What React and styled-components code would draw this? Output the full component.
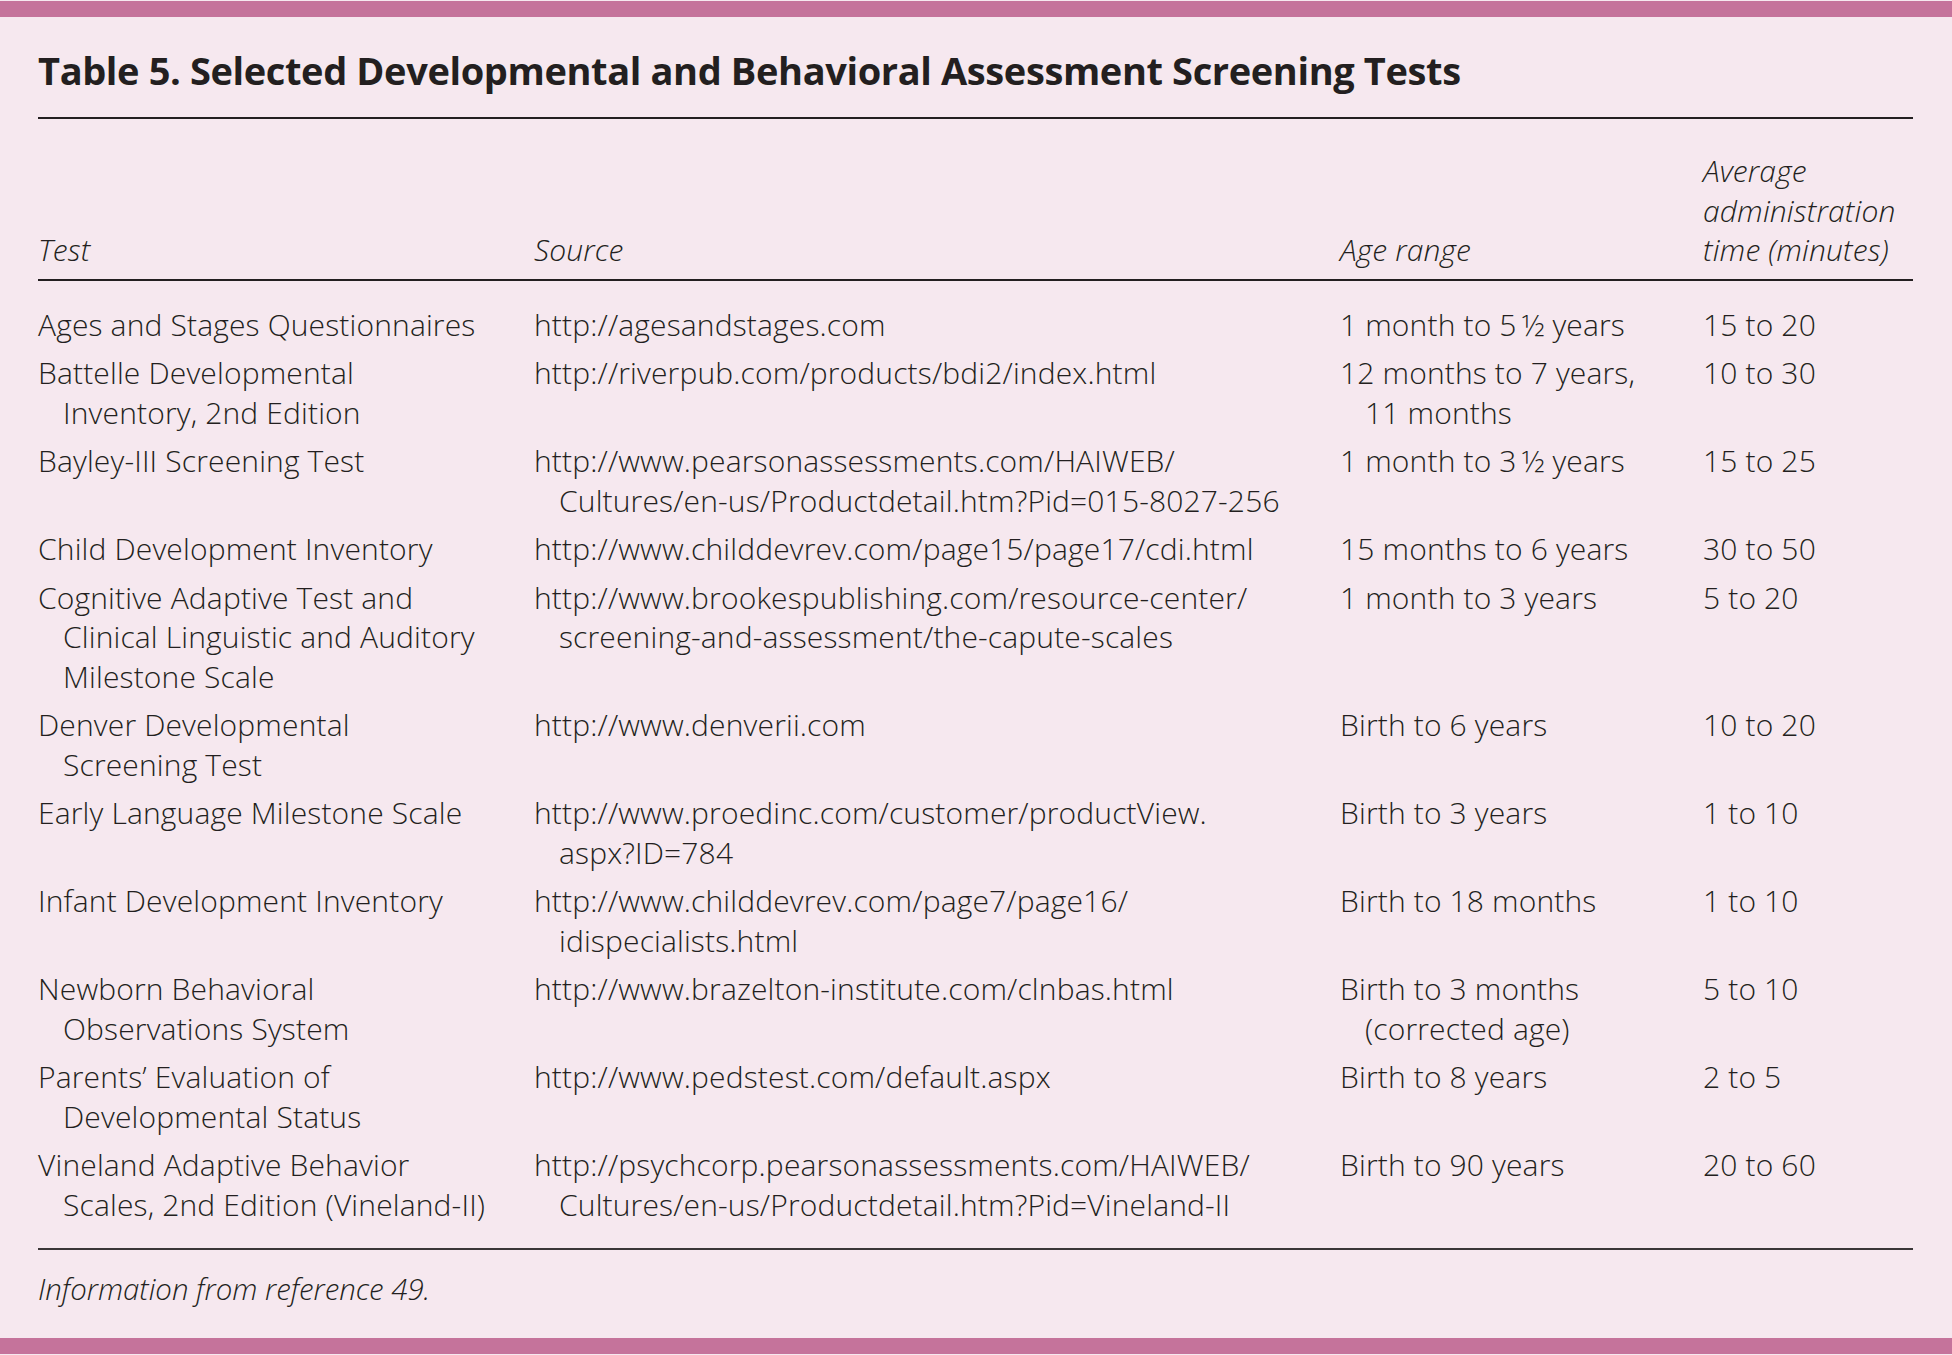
import React from "react";
import styled, { createGlobalStyle } from "styled-components";

const GlobalStyle = createGlobalStyle`
  html, body {
    margin: 0;
    padding: 0;
    background: #f6e8ef;
  }
  body {
    font-family: "Open Sans", "Noto Sans", "Liberation Sans", sans-serif;
    color: #231f20;
  }
`;

const Page = styled.div`
  width: 1952px;
  height: 1355px;
  background: #f6e8ef;
  display: flex;
  flex-direction: column;
  overflow: hidden;
`;

const Bar = styled.div`
  height: 16px;
  margin-top: 1px;
  background: #c5739b;
  flex-shrink: 0;
`;

const Content = styled.div`
  flex: 1;
  padding: 0 39px 0 38px;
  display: flex;
  flex-direction: column;
`;

const Title = styled.h1`
  margin: 31px 0 0 0;
  font-size: 38px;
  line-height: 44px;
  font-weight: 700;
  letter-spacing: -0.38px;
  padding-bottom: 25px;
  border-bottom: 2px solid #231f20;
`;

// shared column layout for header + body rows
const cols = "496px 806px 363px 1fr";

const HeadRow = styled.div`
  display: grid;
  grid-template-columns: ${cols};
  align-items: end;
  padding: 32px 0 9px;
  border-bottom: 2px solid #231f20;
`;

const HeadCell = styled.div`
  font-size: 30px;
  line-height: 39.5px;
  letter-spacing: 0.15px;
  font-style: italic;
  font-weight: 300;
`;

const Body = styled.div`
  padding-top: 24px;
  padding-bottom: 15px;
  border-bottom: 2px solid #3a3637;
`;

const Row = styled.div`
  display: grid;
  grid-template-columns: ${cols};
  padding-bottom: 9px;
`;

const Cell = styled.div`
  font-size: 30px;
  line-height: 39.5px;
  letter-spacing: 0.15px;
  font-weight: 300;
  white-space: nowrap;
`;

const Line = styled.div`
  padding-left: ${(p) => (p.$wrapped ? "25px" : "0")};
`;

const Footnote = styled.p`
  margin: 20px 0 0;
  font-size: 29.4px;
  line-height: 39.5px;
  font-style: italic;
  font-weight: 300;
`;

const BottomBar = styled(Bar)`
  margin-top: auto;
  margin-bottom: 1px;
`;

const rows = [
  [
    ["Ages and Stages Questionnaires"],
    ["http://agesandstages.com"],
    ["1 month to 5\u2009½ years"],
    ["15 to 20"],
  ],
  [
    ["Battelle Developmental", "Inventory, 2nd Edition"],
    ["http://riverpub.com/products/bdi2/index.html"],
    ["12 months to 7 years,", "11 months"],
    ["10 to 30"],
  ],
  [
    ["Bayley-III Screening Test"],
    [
      "http://www.pearsonassessments.com/HAIWEB/",
      "Cultures/en-us/Productdetail.htm?Pid=015-8027-256",
    ],
    ["1 month to 3\u2009½ years"],
    ["15 to 25"],
  ],
  [
    ["Child Development Inventory"],
    ["http://www.childdevrev.com/page15/page17/cdi.html"],
    ["15 months to 6 years"],
    ["30 to 50"],
  ],
  [
    [
      "Cognitive Adaptive Test and",
      "Clinical Linguistic and Auditory",
      "Milestone Scale",
    ],
    [
      "http://www.brookespublishing.com/resource-center/",
      "screening-and-assessment/the-capute-scales",
    ],
    ["1 month to 3 years"],
    ["5 to 20"],
  ],
  [
    ["Denver Developmental", "Screening Test"],
    ["http://www.denverii.com"],
    ["Birth to 6 years"],
    ["10 to 20"],
  ],
  [
    ["Early Language Milestone Scale"],
    ["http://www.proedinc.com/customer/productView.", "aspx?ID=784"],
    ["Birth to 3 years"],
    ["1 to 10"],
  ],
  [
    ["Infant Development Inventory"],
    ["http://www.childdevrev.com/page7/page16/", "idispecialists.html"],
    ["Birth to 18 months"],
    ["1 to 10"],
  ],
  [
    ["Newborn Behavioral", "Observations System"],
    ["http://www.brazelton-institute.com/clnbas.html"],
    ["Birth to 3 months", "(corrected age)"],
    ["5 to 10"],
  ],
  [
    ["Parents\u2019 Evaluation of", "Developmental Status"],
    ["http://www.pedstest.com/default.aspx"],
    ["Birth to 8 years"],
    ["2 to 5"],
  ],
  [
    ["Vineland Adaptive Behavior", "Scales, 2nd Edition (Vineland-II)"],
    [
      "http://psychcorp.pearsonassessments.com/HAIWEB/",
      "Cultures/en-us/Productdetail.htm?Pid=Vineland-II",
    ],
    ["Birth to 90 years"],
    ["20 to 60"],
  ],
];

function App() {
  return (
    <Page>
      <GlobalStyle />
      <Bar />
      <Content>
        <Title>
          Table 5. Selected Developmental and Behavioral Assessment Screening
          Tests
        </Title>
        <HeadRow>
          <HeadCell>Test</HeadCell>
          <HeadCell>Source</HeadCell>
          <HeadCell>Age range</HeadCell>
          <HeadCell>
            Average
            <br />
            administration
            <br />
            time (minutes)
          </HeadCell>
        </HeadRow>
        <Body>
          {rows.map((row, i) => (
            <Row key={i}>
              {row.map((cell, j) => (
                <Cell key={j}>
                  {cell.map((text, k) => (
                    <Line key={k} $wrapped={k > 0}>
                      {text}
                    </Line>
                  ))}
                </Cell>
              ))}
            </Row>
          ))}
        </Body>
        <Footnote>Information from reference 49.</Footnote>
      </Content>
      <BottomBar />
    </Page>
  );
}

export default App;
